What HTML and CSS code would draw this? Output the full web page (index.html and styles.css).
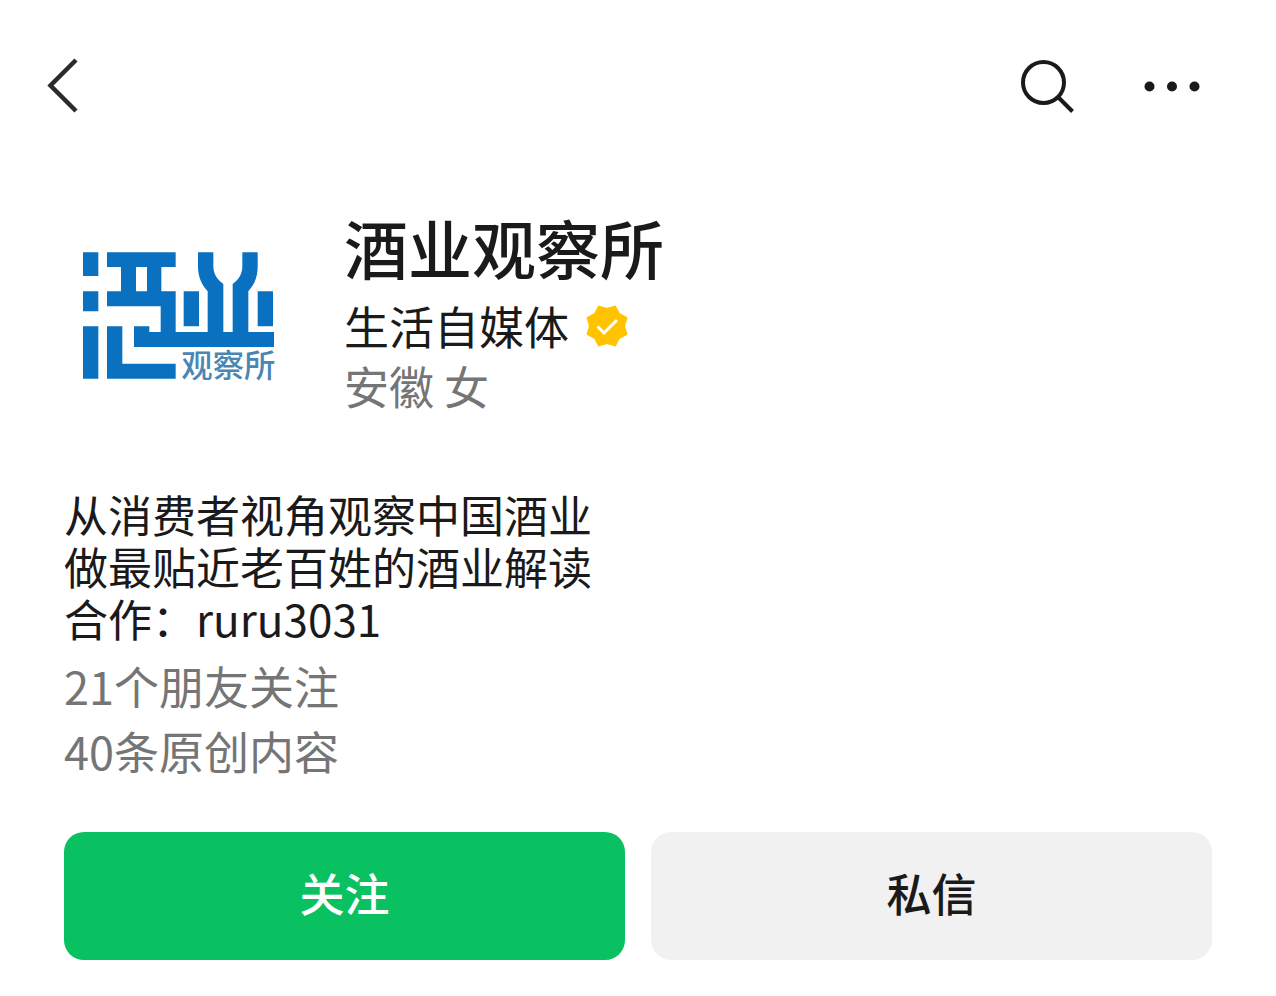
FILE: index.html
```html
<!DOCTYPE html>
<html lang="zh-CN">
<head>
  <meta charset="UTF-8">
  <meta name="viewport" content="width=device-width, initial-scale=1.0">
  <title>酒业观察所</title>
  <link rel="stylesheet" href="styles.css">
</head>
<body>
  <header class="topbar">
    <button class="icon-btn" type="button" aria-label="返回">
      <svg viewBox="0 0 60 60" fill="none" stroke="#2b2b2b" stroke-width="4.500">
        <path d="M32 4 6.500 29.500 32 55"/>
      </svg>
    </button>
    <div class="topbar-actions">
      <button class="icon-btn" type="button" aria-label="搜索">
        <svg viewBox="0 0 60 60" fill="none" stroke="#1a1a1a" stroke-width="4">
          <circle cx="23.5" cy="26.5" r="20.5"/>
          <path d="M37.500 40.500l15 15"/>
        </svg>
      </button>
      <button class="icon-btn" type="button" aria-label="更多">
        <svg viewBox="0 0 60 60" fill="#1a1a1a">
          <circle cx="5.5" cy="30.5" r="5"/>
          <circle cx="28" cy="30.5" r="5"/>
          <circle cx="50.5" cy="30.5" r="5"/>
        </svg>
      </button>
    </div>
  </header>

  <main class="content">
    <section class="profile">
      <svg class="avatar" viewBox="12 -66 708 624" role="img" aria-label="酒业观察所">
        <g fill="#0a70c0">
          <path d="M69 67h46v71H69zM69 184h46v60H69zM69 289h46v157H69z"/>
          <path fill-rule="evenodd" d="M141 67h206v44h-43v73h43v122h96V184c-20-22-29-45-29-75V67h46v40c0 23 9 39 30 55v144h28V162c21-16 29-32 29-55V67h46v42c0 30-8 53-28 75v122h77v45H222v-62h46v17h34v-77H141v-45h42v-73h-42zM228 111v73h33v-73z"/>
          <path d="M141 289h46v112h160v45H141zM371 184h46v105h-46zM593 184h46v105h-46z"/>
        </g>
        <text class="avatar-text" x="364" y="441">观察所</text>
      </svg>
      <div class="profile-info">
        <h1 class="name">酒业观察所</h1>
        <div class="category">
          <span>生活自媒体</span>
          <svg class="badge" viewBox="0 0 44 44" role="img" aria-label="已认证">
            <path fill="#ffc300" stroke="#ffc300" stroke-width="2" stroke-linejoin="round" d="M22 5l8-2.4L34 10l7.400 4L39 22l2.400 8L34 34l-4 7.400L22 39l-8 2.400L10 34l-7.400-4L5 22l-2.400-8L10 10l4-7.400z"/>
            <path fill="none" stroke="#fff" stroke-width="3" d="M12.500 22.500l6.500 6.500 13-13"/>
          </svg>
        </div>
        <p class="region">安徽 女</p>
      </div>
    </section>

    <p class="bio">从消费者视角观察中国酒业<br>做最贴近老百姓的酒业解读<br>合作：ruru3031</p>
    <ul class="stats">
      <li>21个朋友关注</li>
      <li>40条原创内容</li>
    </ul>

    <div class="actions">
      <button class="btn btn-primary" type="button">关注</button>
      <button class="btn" type="button">私信</button>
    </div>
  </main>
</body>
</html>
```
FILE: styles.css
```css
* {
  box-sizing: border-box;
  margin: 0;
  padding: 0;
}

body {
  font-family: "Noto Sans CJK SC", sans-serif;
  background-color: #fff;
  color: #1a1a1a;
}

button {
  font-family: inherit;
  border: none;
  cursor: pointer;
}

.topbar {
  display: flex;
  justify-content: space-between;
  padding: 56px 72px 0 44px;
}

.topbar-actions {
  display: flex;
  gap: 64px;
}

.icon-btn {
  width: 60px;
  height: 60px;
  background: none;
}

.icon-btn svg {
  display: block;
}

.content {
  padding: 92px 64px 36px;
}

.profile {
  display: flex;
  align-items: center;
  gap: 44px;
}

.avatar {
  flex: none;
  width: 236px;
  height: 208px;
}

.avatar-text {
  font-size: 94px;
  font-weight: 500;
  fill: #4a86b4;
}

.name {
  margin-bottom: 12px;
  font-size: 64px;
  font-weight: 500;
  line-height: 76px;
}

.category {
  display: flex;
  align-items: center;
  gap: 16px;
  font-size: 45px;
  line-height: 60px;
}

.badge {
  width: 44px;
  height: 44px;
}

.region {
  font-size: 45px;
  line-height: 60px;
  color: #757575;
}

.bio {
  margin-top: 72px;
  font-size: 44px;
  line-height: 52px;
}

.stats {
  margin-top: 9px;
  list-style: none;
  font-size: 45px;
  line-height: 65px;
  color: #757575;
}

.actions {
  display: grid;
  grid-template-columns: 1fr 1fr;
  gap: 26px;
  margin-top: 49px;
}

.btn {
  height: 128px;
  padding-bottom: 8px;
  border-radius: 20px;
  background-color: #f1f1f1;
  color: #1a1a1a;
  font-size: 45px;
  font-weight: 500;
}

.btn-primary {
  background-color: #09c160;
  color: #fff;
}
```
